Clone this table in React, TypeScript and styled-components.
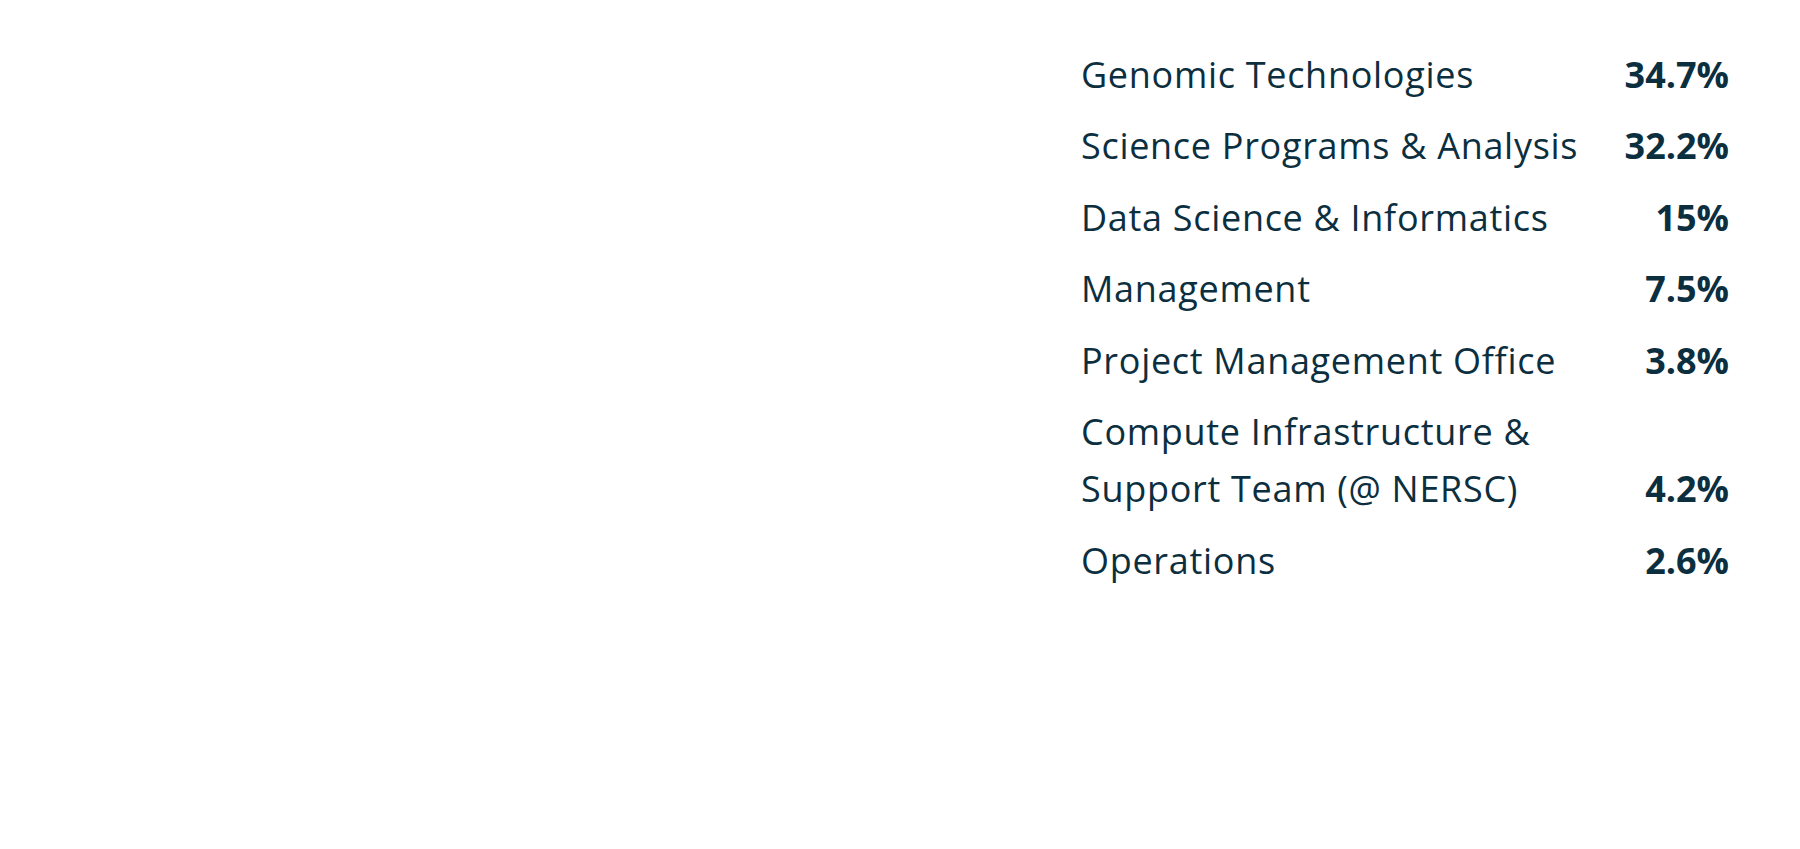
import styled, { createGlobalStyle } from "styled-components"

const GlobalStyle = createGlobalStyle`
  html, body {
    margin: 0;
    padding: 0;
    background: #ffffff;
  }
  body {
    font-family: "Open Sans", "Liberation Sans", sans-serif;
    color: #0c2f3f;
  }
`

const Page = styled.div`
  width: 1800px;
  height: 849px;
  display: grid;
  grid-template-columns: 1081px 648px 1fr;
  box-sizing: border-box;
  padding-top: 46px;
`

const Blank = styled.div``

const List = styled.ul`
  list-style: none;
  margin: 0;
  padding: 0;
  display: flex;
  flex-direction: column;
  gap: 14px;
`

const Row = styled.li`
  display: grid;
  grid-template-columns: 1fr auto;
  align-items: end;
  column-gap: 14px;
  font-size: 36px;
  line-height: 57.4px;
`

const Label = styled.span`
  font-weight: 400;
  letter-spacing: 0.7px;
  max-width: 530px;
`

const Percent = styled.span`
  font-weight: 700;
  text-align: right;
`

const divisions = [
  { name: "Genomic Technologies", share: "34.7%" },
  { name: "Science Programs & Analysis", share: "32.2%" },
  { name: "Data Science & Informatics", share: "15%" },
  { name: "Management", share: "7.5%" },
  { name: "Project Management Office", share: "3.8%" },
  { name: "Compute Infrastructure & Support Team (@ NERSC)", share: "4.2%" },
  { name: "Operations", share: "2.6%" },
]

const App = () => {
  return (
    <>
      <GlobalStyle />
      <Page>
        <Blank />
        <List>
          {divisions.map((d, index) => (
            <Row key={`${d.name}-${index}`}>
              <Label>{d.name}</Label>
              <Percent>{d.share}</Percent>
            </Row>
          ))}
        </List>
      </Page>
    </>
  )
}

export default App
